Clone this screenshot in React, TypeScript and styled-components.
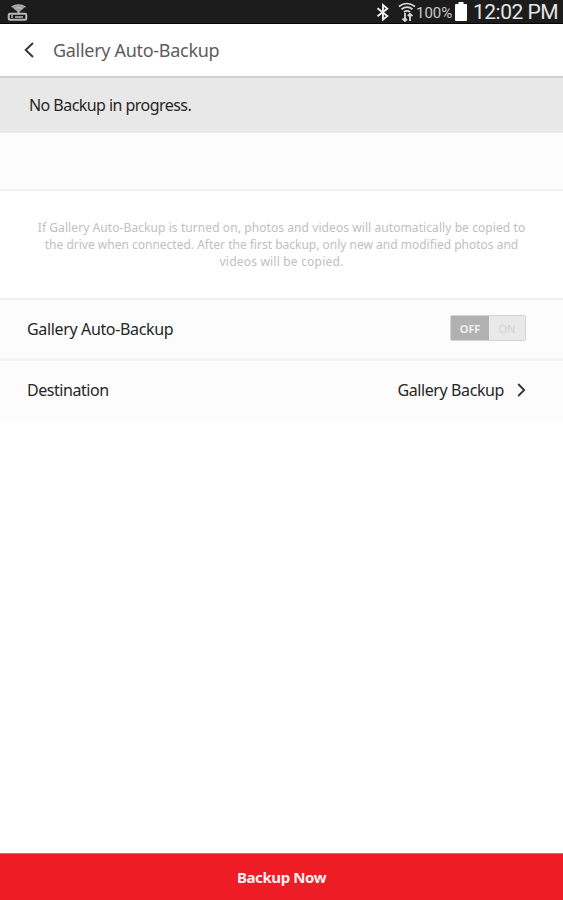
import React from "react";
import styled, { createGlobalStyle } from "styled-components";

const GlobalStyle = createGlobalStyle`
  * { box-sizing: border-box; }
  body { margin: 0; background: #fff; }
  button { font: inherit; border: 0; padding: 0; background: none; cursor: pointer; }
`;

const Screen = styled.main`
  display: flex;
  flex-direction: column;
  height: 900px;
  overflow: hidden;
  background: #fff;
  color: #262626;
  font-family: "Noto Sans", "Open Sans", sans-serif;
`;

const StatusBar = styled.div`
  display: flex;
  align-items: center;
  height: 24px;
  flex: none;
  padding: 0 5px 0 7px;
  background: #1c1c1c;
  border-bottom: 1px solid #050505;
  color: #e4e4e4;
  font-family: Roboto, sans-serif;
  svg { display: block; flex: none; }
`;

const StatusGroup = styled.div`
  display: flex;
  align-items: center;
  margin-left: auto;
`;

const SignalGroup = styled.div`
  display: flex;
  align-items: center;
  gap: 8px;
`;

const Percent = styled.span`
  width: 39px;
  font-size: 15px;
  line-height: 22px;
  padding-top: 2px;
  color: #c9c9c9;
  white-space: nowrap;
`;

const Clock = styled.span`
  width: 85px;
  margin-left: 6px;
  font-size: 21px;
  letter-spacing: -0.5px;
  line-height: 24px;
  white-space: nowrap;
`;

const Header = styled.header`
  display: flex;
  align-items: center;
  flex: none;
  height: 54px;
  padding: 0 24px 0;
  border-bottom: 2px solid #cfcfcf;
`;

const BackButton = styled.button`
  width: 29px;
  height: 20px;
  svg { display: block; }
`;

const Label = styled.span<{ $size?: number; $tracking?: number }>`
  font-size: ${(p) => p.$size ?? 16}px;
  letter-spacing: ${(p) => p.$tracking ?? 0}px;
  line-height: 24px;
  white-space: nowrap;
`;

const Title = styled(Label).attrs({ as: "h1" })`
  margin: 0;
  font-weight: 400;
  color: #5c5c5c;
`;

const Progress = styled.section`
  display: flex;
  align-items: center;
  flex: none;
  height: 55px;
  padding: 0 29px 1px;
  background: #e8e8e8;
`;

const Spacer = styled.div`
  flex: none;
  height: 58px;
  background: #fcfcfc;
  border-bottom: 2px solid #f0f0f0;
`;

const Description = styled.p`
  display: flex;
  flex-direction: column;
  align-items: center;
  flex: none;
  height: 109px;
  margin: 0;
  padding-top: 28px;
  border-bottom: 2px solid #f0f0f0;
  color: #c0c0c0;
`;

const DescriptionLine = styled(Label)`
  line-height: 17px;
`;

const SettingRow = styled.div<{ $last?: boolean }>`
  display: flex;
  align-items: center;
  justify-content: space-between;
  flex: none;
  height: ${(p) => (p.$last ? 60 : 61)}px;
  padding: 0 37px ${(p) => (p.$last ? 2 : 0)}px 27px;
  background: #fcfcfc;
  border-bottom: ${(p) => (p.$last ? "0" : "3px solid #f5f5f5")};
`;

const Toggle = styled.button`
  display: grid;
  grid-template-columns: 38px 1fr;
  width: 76px;
  height: 26px;
  margin-top: -2px;
  border: 1px solid #d3d3d3;
  border-radius: 2px;
  overflow: hidden;
`;

const ToggleSide = styled.span<{ $active?: boolean }>`
  display: flex;
  align-items: center;
  justify-content: center;
  background: ${(p) => (p.$active ? "#b1b1b1" : "#e9e9e9")};
  color: ${(p) => (p.$active ? "#f4f4f4" : "#d2d2d2")};
  font-size: 11px;
  font-weight: ${(p) => (p.$active ? 600 : 400)};
`;

const Destination = styled.button`
  display: flex;
  align-items: center;
  gap: 13px;
  color: inherit;
  svg { display: block; }
`;

const BackupButton = styled.button`
  height: 47px;
  margin-top: auto;
  flex: none;
  background: #ee1c25;
  border-top: 1px solid #e5636a;
  color: #fff2f2;
  font-weight: 700;
`;

const DriveIcon = () => (
  <svg width="21" height="22" viewBox="0 0 21 22" fill="none" stroke="#b9b9b9">
    <path d="M5 6Q11 2 18 6L13 10.500H10Z" fill="#9a9a9a" stroke="none" />
    <path d="M4.500 6Q11.500 1.800 18.500 6M7.500 8Q11.500 5.500 15.500 8" strokeWidth="1.300" />
    <path d="M11.500 9v4" strokeWidth="2" />
    <rect x="1.700" y="12.700" width="17.600" height="6" rx="1.200" strokeWidth="2" />
    <path d="M5 14v3M8 16h8" strokeWidth="1.400" />
  </svg>
);

const BluetoothIcon = () => (
  <svg width="14" height="20" viewBox="0 0 14 20" fill="none" stroke="#efefef" strokeWidth="1.900">
    <path d="M1.500 6.300 11.300 14 7 17.500V3l4.300 3.600L1.500 14.200" />
  </svg>
);

const WifiIcon = () => (
  <svg width="18" height="21" viewBox="0 0 18 21" fill="none" stroke="#d8d8d8" strokeWidth="1.700">
    <path d="M1 5.500Q8.500-.5 17 5.500M3.500 8.200Q9 4 14.500 8.200M6 11Q9 8.600 12 11" />
    <path d="M7 12v8M4.500 17.500 7 20l2-2M12 20v-7M9.800 15l2.200-2 2.500 2" strokeWidth="1.800" />
  </svg>
);

const BatteryIcon = () => (
  <svg width="12" height="19" viewBox="0 0 12 19" fill="#fff">
    <path d="M3.500 0h5v2H11q1 0 1 1v15q0 1-1 1H1q-1 0-1-1V3q0-1 1-1h2.500z" />
  </svg>
);

const ChevronLeft = () => (
  <svg width="12" height="20" viewBox="0 0 12 20" fill="none" stroke="#333" strokeWidth="1.900">
    <path d="M9 3 1.700 10 9 17" />
  </svg>
);

const ChevronRight = () => (
  <svg width="9" height="16" viewBox="0 0 9 16" fill="none" stroke="#333" strokeWidth="1.800">
    <path d="m1.200 2 6 6-6 6" />
  </svg>
);

export default function App() {
  return (
    <>
      <GlobalStyle />
      <Screen>
        <StatusBar>
          <DriveIcon />
          <StatusGroup>
            <SignalGroup>
              <BluetoothIcon />
              <WifiIcon />
            </SignalGroup>
            <Percent>100%</Percent>
            <BatteryIcon />
            <Clock>12:02 PM</Clock>
          </StatusGroup>
        </StatusBar>
        <Header>
          <BackButton aria-label="Back"><ChevronLeft /></BackButton>
          <Title $size={18} $tracking={-0.3}>Gallery Auto-Backup</Title>
        </Header>
        <Progress><Label $size={16} $tracking={-0.55}>No Backup in progress.</Label></Progress>
        <Spacer />
        <Description>
          <DescriptionLine $size={12} $tracking={0.08}>If Gallery Auto-Backup is turned on, photos and videos will automatically be copied to</DescriptionLine>
          <DescriptionLine $size={12} $tracking={0}>the drive when connected. After the first backup, only new and modified photos and</DescriptionLine>
          <DescriptionLine $size={12} $tracking={0.2}>videos will be copied.</DescriptionLine>
        </Description>
        <SettingRow>
          <Label $size={16} $tracking={-0.35}>Gallery Auto-Backup</Label>
          <Toggle role="switch" aria-checked={false}>
            <ToggleSide $active>OFF</ToggleSide>
            <ToggleSide>ON</ToggleSide>
          </Toggle>
        </SettingRow>
        <SettingRow $last>
          <Label $size={16} $tracking={-0.45}>Destination</Label>
          <Destination>
            <Label $size={16} $tracking={-0.4}>Gallery Backup</Label>
            <ChevronRight />
          </Destination>
        </SettingRow>
        <BackupButton><Label $size={15} $tracking={-0.4}>Backup Now</Label></BackupButton>
      </Screen>
    </>
  );
}
